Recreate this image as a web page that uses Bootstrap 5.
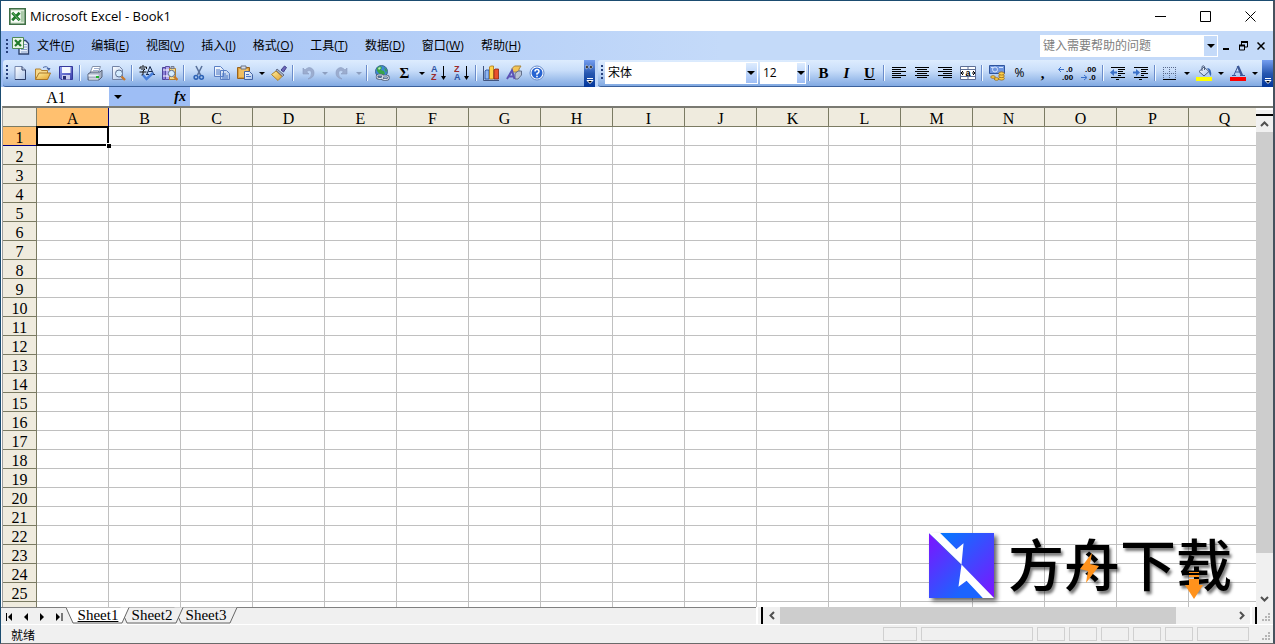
<!DOCTYPE html>
<html lang="zh-CN">
<head>
<meta charset="utf-8">
<meta name="viewport" content="width=device-width, initial-scale=1">
<title>Microsoft Excel - Book1</title>
<link href="https://cdn.jsdelivr.net/npm/bootstrap@5.3.0/dist/css/bootstrap.min.css" rel="stylesheet">
<style>
:root{--ui:"Open Sans","Noto Sans CJK SC",sans-serif;--sheet:"Liberation Serif","Noto Sans CJK SC",serif}
body{font:12px/16px var(--ui);color:#000;background:#fff}
button{font:inherit;color:inherit;background:none;border:0;padding:0}
svg{display:block;flex:none}
.window{border:1px solid #1b4c70;border-right-color:#47525e;border-bottom-color:#6a6a6a;border-right-width:2px}
.window>*{flex-shrink:0}
.titlebar{height:30px;padding-left:8px}
.titlebar .app-name{font-size:13px}
.winbtn{width:45px;height:29px}
.band{background:linear-gradient(90deg,#9ebef5,#c4daf9 720px)}
.menubar{height:29px;padding:0 8px 0 5px}
.grip{width:2px;background:repeating-linear-gradient(180deg,#27417c 0 2px,transparent 2px 4px);height:14px}
.toolbar-x .grip{margin:5px 0 0 3px}
.menu-items{gap:1px;margin-left:-1px}
.menubar a{color:#000;text-decoration:none;padding:0 8px;white-space:nowrap}
.mdi{gap:9px;margin-left:4px}
.combo{background:#fff;border:1px solid #fff;height:22px}
.toolbar-x .combo{margin:2px 0 0 2px}
.combo input{border:0;outline:0;background:transparent;min-width:0;padding:0 2px;font:inherit;line-height:18px}
.combo input::placeholder{color:#808080;opacity:1}
.combo button{width:13px;background:linear-gradient(#ddecfe,#9ebef5)}
.combo.ask{width:178px}
.combo.face{width:153px}
.combo.size{width:46px}
.combo.ask button{background:#c4daf9}
.caret::before{content:"";display:block;border:4px solid transparent;border-top-color:currentColor;border-bottom:0;margin:auto;width:0}
.caret.sm::before{border-width:3px 3px 0}
.toolrow{height:27px;padding-left:2px}
.toolbar-x{height:27px;border-bottom:1px solid #3b619c;background:linear-gradient(#ddecfe,#c9defa 40%,#81a9e2);border-radius:3px 0 0 3px}
#std{padding-right:36px}
#fmt{margin-left:3px}
.tb{width:23px;height:26px;display:flex;align-items:center;justify-content:center}
.dd{width:11px;height:26px}
.dis{color:#8d9fc0}
.vsep{width:2px;height:16px;margin:5px 2px 0;background:linear-gradient(90deg,#6a8ccb 50%,#f1f9ff 50%)}
.endcap{width:11px;height:27px;background:linear-gradient(#759ef0,#2757b0 50%,#00359c)}
.rich{font-family:var(--sheet);font-weight:700;font-size:15px}
.rich.fx{font-size:14px}
.formula{height:19px;background:#fff;padding-left:2px}
.namebox{width:106px;border:0;outline:0;text-align:center;font:16px/18px var(--sheet);padding:2px 0 0}
.namebtn{width:81px;background:#9ebef5;padding:0 4px 0 5px}
.fx-input{border:0;outline:0;font:16px/18px var(--sheet)}
.workbook{border-top:2px solid #7a7a72;border-left:1px solid #a0a0a0;margin-left:1px;min-height:0;flex:1 1 0}
.window>.workbook{flex-shrink:1}
.grid-area{overflow:hidden;min-width:0}
.cells{table-layout:fixed;border-collapse:separate;border-spacing:0;width:1258px;font:16px/18px var(--sheet)}
.cells th,.cells td{height:19px;padding:0;border:solid #c0c0c0;border-width:0 1px 1px 0}
.cells th{font-weight:400;text-align:center;background:#efebde;border-color:#7b7b63;line-height:15px;padding-top:3px}
.cells col:first-child{width:34px}.cells col{width:72px}
.cells th.on{background:#ffc06f;border-color:#000080}
.cells td.cur{position:relative}
.cells td.cur::before{content:"";position:absolute;inset:-1px -1px -1px -1px;border:2px solid #000}
.cells td.cur::after{content:"";position:absolute;right:-3px;bottom:-3px;width:5px;height:5px;background:#000;border:solid #fff;border-width:1px 0 0 1px}
.vscroll{width:17px;background:#f0f0f0}
.vscroll button,.hscroll button{color:#505050}
.vscroll button{height:16px}
.hscroll button{width:17px}
.split{height:8px;border:solid #000;border-width:0 0 2px;background:linear-gradient(#fff 2px,#f0f0f0 2px)}
.hsplit{width:7px;border-right:2px solid #000;background:linear-gradient(90deg,#fff 2px,#f0f0f0 2px)}
.thumb{background:#cdcdcd}
.sheetbar{height:17px;background:#f0f0f0;min-width:0}
.tabside{flex:755;border-top:1px solid #808080}
.hscroll{flex:517}
.nav-tri{width:17px;height:16px}
.nav-tri:nth-of-type(4){width:14px}
.sheettabs{font:15px/14px var(--sheet)}
.sheettab{width:64px;margin-right:-10px;height:16px;position:relative;padding:0 0 2px}
.sheettab svg{position:absolute;left:0;top:-1px}
.sheettab span{position:relative;white-space:nowrap}
.sizer{width:16px;display:flex;align-items:flex-end;justify-content:flex-end}
.statusbar{height:19px;background:#f0f0f0;border-top:1px solid #fff;padding-left:10px}
.pane{height:14px;border:1px solid #d0d0d0}
.logo-mark{position:absolute;right:41px;bottom:8px}
.logo-mark .tile{filter:drop-shadow(3px 3px 2px #0009)}
.logo-name{font:500 56px/58px "Noto Sans CJK SC",sans-serif;text-shadow:2px 3px 3px #0008;position:relative;margin-left:14px;height:66px}
.logo-name svg{position:absolute;left:0;top:0}
svg text{font-family:"Liberation Sans",sans-serif}
</style>
</head>
<body>
<svg width="0" height="0" class="position-absolute" aria-hidden="true">
<defs>
<linearGradient id="gy" x2="1" y2="1"><stop stop-color="#fff0a0"/><stop offset="1" stop-color="#e2a02c"/></linearGradient>
<linearGradient id="gb" x2="1" y2="1"><stop stop-color="#fff"/><stop offset="1" stop-color="#a9c3ea"/></linearGradient>
<linearGradient id="gs" x2="1" y2="1"><stop stop-color="#8f9cf0"/><stop offset="1" stop-color="#3a3fa8"/></linearGradient>
<linearGradient id="lt" x2="1" y2="1"><stop stop-color="#8012ff"/><stop offset=".7" stop-color="#1b64ff"/></linearGradient>
<linearGradient id="rt" x2="1" y2="1"><stop offset=".15" stop-color="#0a74ff"/><stop offset="1" stop-color="#8012ff"/></linearGradient>
<symbol id="i-new" viewBox="0 0 16 16"><path d="M3 1.500h7l3.500 3.500v9.500H3z" fill="url(#gb)" stroke="#7486ad"/><path d="M10 1.500V5h3.500M3 14.500h10.500V5" fill="none" stroke="#2c3d66"/></symbol>
<symbol id="i-open" viewBox="0 0 16 16"><path d="M.5 14V4h5l1 1.500h6V14z" fill="#f7d98a" stroke="#b08030"/><path d="M.5 14.500L4 8h11.500l-3 6.500z" fill="url(#gy)" stroke="#a87528"/><path d="M8 2.500q4-2 5.500 1" stroke="#4a67a5" fill="none"/><path d="M11.500 3h4L14 6z" fill="#4a67a5"/></symbol>
<symbol id="i-save" viewBox="0 0 16 16"><path d="M1.500 1.500h13v13H3l-1.500-1.500z" fill="url(#gs)" stroke="#34389c"/><path d="M4 2h8.500v6H4z" fill="#f5f8ff"/><path d="M4 10h8v4.500H4z" fill="#c9ccee"/><path d="M5 11h3v3.500H5z" fill="#262b72"/></symbol>
<symbol id="i-print" viewBox="0 0 16 16"><path d="M5.500 1.500h8L11 8H3z" fill="#fff" stroke="#8390a8"/><path d="M7 3.500h5M6 5.500h5" stroke="#9fb0d0"/><path d="M1 9l3-2h9l2-2v7l-3 3H1z" fill="#a9b3c6" stroke="#59647c"/><path d="M1.500 9.500h10v2h-10z" fill="#e8edf6"/><path d="M9 11h3v2H9z" fill="#25b52c"/><path d="M2 14h9" stroke="#f4f6fa"/></symbol>
<symbol id="i-preview" viewBox="0 0 16 16"><path d="M2.500 1.500h7l3 3v10h-10z" fill="url(#gb)" stroke="#7383a5"/><circle cx="9" cy="8.500" r="3.500" fill="#d4ecff" stroke="#5d6f90"/><path d="M11.500 11.500l3.500 3.500" stroke="#c6792c" stroke-width="2.400"/></symbol>
<symbol id="i-spell" viewBox="0 0 16 16"><path d="M4 0v1.500M1 4V2h6.500v2M2 4h4L4 6v4H2.500M.5 7h7" stroke="#111" fill="none"/><path d="M8 9l3-7.500L14.500 9M9.500 6.500H13M7 9.500h3M13 9.500h3" stroke="#172b50" fill="none"/><path d="M4 10l3.500 4L14 8" stroke="#477fdc" stroke-width="2.400" fill="none"/></symbol>
<symbol id="i-research" viewBox="0 0 16 16"><path d="M.5 2.500h3v12h-3z" fill="#8a7fd8" stroke="#4c4396"/><path d="M3.500 1.500h4v13h-4z" fill="#b3a8f0" stroke="#5b4ea5"/><path d="M1 5h6M1 11h6" stroke="#fff"/><path d="M7.500 3.500h6v11h-6z" fill="#f5d887" stroke="#b08030"/><path d="M9 1.500h3v2H9z" fill="#b7bccb" stroke="#717a90"/><circle cx="9.500" cy="8.500" r="3.200" fill="#d4ecff" stroke="#5d6f90"/><path d="M12 11.500l3.500 3.500" stroke="#c6792c" stroke-width="2.400"/></symbol>
<symbol id="i-cut" viewBox="0 0 16 16"><path d="M5 1l4.500 9M11 1L6.500 10" stroke="#5a719b" stroke-width="1.600"/><circle cx="5" cy="12.300" r="1.900" fill="none" stroke="#2d62b5" stroke-width="1.500"/><circle cx="10.500" cy="12.300" r="1.900" fill="none" stroke="#2d62b5" stroke-width="1.500"/></symbol>
<symbol id="i-copy" viewBox="0 0 16 16"><g fill="url(#gb)" stroke="#5a7fc4"><path d="M.5 1.500h6l3 3v7h-9zM6.500 5.500h6l3 3v6h-9z"/></g><path d="M2 5h4M2 7h4M2 9h4M8 9h4M8 11h6M8 13h6" stroke="#4d78c6"/></symbol>
<symbol id="i-paste" viewBox="0 0 16 16"><path d="M.5 2.500h12v11H.5z" fill="#dc9e38" stroke="#99631c"/><path d="M2 4h9v8H2z" fill="#f0bf62"/><path d="M4 1h5v3H4z" fill="#d8dde8" stroke="#6a7488"/><path d="M7.500 6.500h5l3 3v5h-8z" fill="url(#gb)" stroke="#4565a5"/><path d="M9 9.500h3M9 11.500h5" stroke="#4d78c6"/></symbol>
<symbol id="i-brush" viewBox="0 0 16 16"><path d="M10 5l3.500-4 2 1.500L12.500 7z" fill="#6c66b8" stroke="#41418a"/><path d="M6 4l7 6-1.500 1.500L5 5.500z" fill="#a7b0c5" stroke="#616c86"/><path d="M5 6L.5 9.500 7 15.500 11 11.500z" fill="url(#gy)" stroke="#aa8230"/></symbol>
<symbol id="i-undo" viewBox="0 0 16 16"><path d="M3 3v6h6L6.500 6.700Q11 4 11.500 8T8 14q6-1 6-6T9 2.500Q6.500 3 5 5z" fill="#9cadcf" stroke="#8b9cc0" stroke-width=".6"/></symbol>
<symbol id="i-link" viewBox="0 0 16 16"><circle cx="7.500" cy="6.500" r="6" fill="#3e86d8" stroke="#3d6a8c"/><path d="M3 3q3-3 5-1l-1 3 3 1 1 3-4 2-4-5zM10 2l3 3-1 3z" fill="#38a548"/><path d="M4 3q2-1.500 3 0L5 5z" fill="#bff0b8"/><g fill="none"><g stroke="#56647e" stroke-width="2.400"><rect x="3" y="10" width="6" height="3.500" rx="1.700"/><rect x="8" y="11" width="6.500" height="3.500" rx="1.700"/></g><g stroke="#dfe5ef"><rect x="3" y="10" width="6" height="3.500" rx="1.700"/><rect x="8" y="11" width="6.500" height="3.500" rx="1.700"/></g></g></symbol>
<symbol id="i-chart" viewBox="0 0 16 16"><path d="M.5 1v14.500H16" fill="none" stroke="#41547e"/><g stroke-width=".8"><path d="M2 6l1-1h3v9H2z" fill="#8fb6f2" stroke="#224a96"/><path d="M6.500 2l1-1h3v13h-4z" fill="#ffd34d" stroke="#a97412"/><path d="M11 5l1-1h3.500v10H11z" fill="#e8502c" stroke="#8d2510"/></g></symbol>
<symbol id="i-draw" viewBox="0 0 16 16"><path d="M6 3.500L8.500 1H15l-2 3v3H6z" fill="#f3c558" stroke="#a9843c"/><path d="M9 8.500L12 6h3.500v4L12 14H9z" fill="#b9c2d3" stroke="#63708c"/><path d="M1 14L6 5.500l2.500 8.500M3 11.500h5" stroke="#5c53b5" stroke-width="2" fill="none"/></symbol>
<symbol id="i-help" viewBox="0 0 16 16"><circle cx="8" cy="8" r="7" fill="#fff" stroke="#6489ca"/><circle cx="8" cy="8" r="5.500" fill="#2864d2"/><path d="M6 6.500Q6 4.500 8 4.500t2 2Q10 8 8 8.500v1.200" stroke="#fff" stroke-width="1.500" fill="none"/><path d="M7.200 10.800h1.600v1.500H7.200z" fill="#fff"/></symbol>
<symbol id="i-l" viewBox="0 0 16 16"><path d="M1 2.500h14M1 4.500h9M1 6.500h14M1 8.500h9M1 10.500h14M1 12.500h9" stroke="#000"/></symbol>
<symbol id="i-c" viewBox="0 0 16 16"><path d="M1 2.500h14M3 4.500h10M1 6.500h14M3 8.500h10M1 10.500h14M3 12.500h10" stroke="#000"/></symbol>
<symbol id="i-merge" viewBox="0 0 16 16"><path d="M.5 1.500h15v13H.5z" fill="#fff" stroke="#5d6f96"/><path d="M1 4.500h14M1 11.500h14M8 1.500v3M8 11.500v3" stroke="#5d6f96"/><path d="M1 8h3M15 8h-3M3 6L1 8l2 2M13 6l2 2-2 2" stroke="#000" fill="none"/><text x="5.500" y="10.500" font-size="9" font-weight="700">a</text></symbol>
<symbol id="i-money" viewBox="0 0 16 16"><path d="M.5.500h15v8H.5z" fill="#6f96df" stroke="#2f559e"/><circle cx="6" cy="4.500" r="2.500" fill="none" stroke="#d4e3fc"/><path d="M2 2.500h2M10 2.500h4" stroke="#d4e3fc"/><g fill="#ffd04a" stroke="#9c6b12" stroke-width=".8"><ellipse cx="12.500" cy="13.500" rx="2.800" ry="1.600"/><ellipse cx="12.500" cy="11" rx="2.800" ry="1.600"/><ellipse cx="12.500" cy="8.500" rx="2.800" ry="1.600"/><ellipse cx="4" cy="12" rx="2.300" ry="1.300"/><ellipse cx="7.500" cy="14" rx="2.300" ry="1.300"/></g></symbol>
<symbol id="i-out" viewBox="0 0 16 16"><path d="M1 2.500h14M8 4.500h7M8 6.500h5M8 8.500h7M8 10.500h3M1 12.500h14M6 14.500h3" stroke="#000"/><path d="M7 7.500H2" stroke="#3a70c8" stroke-width="2"/><path d="M4 4L0 7.500 4 11z" fill="#3a70c8"/></symbol>
<symbol id="i-in" viewBox="0 0 16 16"><path d="M1 2.500h14M8 4.500h7M8 6.500h5M8 8.500h7M8 10.500h3M1 12.500h14M6 14.500h3" stroke="#000"/><path d="M0 7.500h5" stroke="#3a70c8" stroke-width="2"/><path d="M3 4l4 3.500L3 11z" fill="#3a70c8"/></symbol>
<symbol id="i-border" viewBox="0 0 16 16"><path d="M1.500 2v11M7.500 2v11M13.500 2v11M1 2.500h13M1 8.500h13" stroke="#5a6a8c" stroke-dasharray="1 1"/><path d="M1 14.500h13" stroke="#000"/></symbol>
<symbol id="i-fill" viewBox="0 0 16 16"><path d="M3 6.500L8 2l5 4.500-5 4.500z" fill="url(#gb)" stroke="#4c5d7d"/><path d="M6 6V1.500q1.500-1.500 2.500 0V5" fill="none" stroke="#4c5d7d"/><path d="M11 3q5 0 4 8-2-1-2-5z" fill="#3767b4"/><path d="M0 12h16v4H0z" fill="#ff0"/></symbol>
<symbol id="i-color" viewBox="0 0 16 16"><path d="M4 10L8 1M5.500 7h5M2 10.500h4M10 10.500h5" stroke="#3c5897" fill="none"/><path d="M7.800 1l4.200 9.500" stroke="#3c5897" stroke-width="2.400"/><path d="M0 12h16v4H0z" fill="#f00"/></symbol>
<symbol id="i-xl" viewBox="0 0 16 16"><path d="M.5.500h15v15H.5z" fill="#dcebd8" stroke="#3f6f45" stroke-width="2"/><path d="M10 3h4v10h-4z" fill="#a9c9a8"/><path d="M2 3h9v10H2z" fill="#fff"/><path d="M3 4.500l7 7M10 4.500l-7 7" stroke="#1f7a2a" stroke-width="2.600"/><path d="M3.500 4.500l6 7" stroke="#7fbf80" stroke-width=".8"/></symbol>
</defs>
</svg>
<div class="window d-flex flex-column vh-100">
 <header class="titlebar d-flex align-items-center">
  <svg width="17" height="17"><use href="#i-xl"/></svg>
  <span class="app-name ms-1 me-auto">Microsoft Excel - Book1</span>
  <button class="winbtn" aria-label="最小化"><svg class="m-auto" width="11" height="11"><path d="M0 5.500h11" stroke="#000"/></svg></button>
  <button class="winbtn" aria-label="最大化"><svg class="m-auto" width="11" height="11"><path d="M.5.500h10v10H.5z" stroke="#000" fill="none"/></svg></button>
  <button class="winbtn" aria-label="关闭"><svg class="m-auto" width="11" height="11"><path d="M.5.500l10 10m0-10l-10 10" stroke="#000"/></svg></button>
 </header>
 <div class="band">
  <nav class="menubar d-flex align-items-center" aria-label="菜单">
   <span class="grip me-1"></span>
   <svg width="18" height="18" viewBox="0 0 18 18"><path d="M7 3.500h6.500l3 3v10.500H7z" fill="#e8effc" stroke="#2d436f" stroke-width="1.400"/><path d="M12 7.500h3M12 10h3M9 12.500h6M9 15h6" stroke="#839dca"/><path d="M.5.500h11v11H.5z" fill="#eaf4e6" stroke="#4f8a55"/><path d="M3 3l6 6M9 3L3 9" stroke="#217a2b" stroke-width="2.200"/></svg>
   <div class="d-flex menu-items">
   <a href="#">文件(<u>F</u>)</a><a href="#">编辑(<u>E</u>)</a><a href="#">视图(<u>V</u>)</a><a href="#">插入(<u>I</u>)</a><a href="#">格式(<u>O</u>)</a><a href="#">工具(<u>T</u>)</a><a href="#">数据(<u>D</u>)</a><a href="#">窗口(<u>W</u>)</a><a href="#">帮助(<u>H</u>)</a>
   </div>
   <div class="combo ask d-flex ms-auto"><input class="flex-fill" aria-label="键入需要帮助的问题" placeholder="键入需要帮助的问题"><button class="caret" aria-label="展开"></button></div>
   <div class="mdi d-flex align-items-center">
   <button aria-label="最小化窗口"><svg width="8" height="10"><path d="M1 8h6" stroke="#000" stroke-width="2"/></svg></button>
   <button aria-label="还原窗口"><svg width="9" height="10"><path d="M2.500 4V1h6v5H6" fill="none" stroke="#000"/><path d="M2 1h7M0 4.500h6" stroke="#000" stroke-width="2"/><path d="M.5 4v5h5V4" fill="none" stroke="#000"/></svg></button>
   <button aria-label="关闭窗口"><svg width="8" height="8"><path d="M.5.500l7 7m0-7l-7 7" stroke="#000" stroke-width="1.500"/></svg></button>
   </div>
  </nav>
  <div class="toolrow d-flex">
   <div class="toolbar-x d-flex align-items-start" id="std" role="toolbar" aria-label="常用">
    <span class="grip"></span>
   </div>
   <div class="endcap"><svg width="11" height="27"><path d="M2 5l3 2-3 2zM6 5l3 2-3 2z" stroke="#fff" stroke-width=".5"/><path d="M3 18.500h6" stroke="#fff"/><path d="M3 20.500h6l-3 3z" stroke="#fff"/></svg></div>
   <div class="toolbar-x d-flex align-items-start flex-grow-1" id="fmt" role="toolbar" aria-label="格式">
    <span class="grip"></span>
    <div class="combo face d-flex"><input class="flex-fill" aria-label="字体" value="宋体"><button class="caret" aria-label="选择字体"></button></div>
    <div class="combo size d-flex"><input class="flex-fill" aria-label="字号" value="12"><button class="caret" aria-label="选择字号"></button></div>
   </div>
   <div class="endcap"><svg width="11" height="27"><path d="M3 18.500h6" stroke="#fff"/><path d="M3 20.500h6l-3 3z" stroke="#fff"/></svg></div>
  </div>
 </div>
 <div class="formula d-flex">
  <input class="namebox" aria-label="名称框" value="A1">
  <div class="namebtn d-flex align-items-center justify-content-between"><button class="caret" aria-label="名称列表"></button><button class="fst-italic rich fx" aria-label="插入函数">fx</button></div>
  <input class="fx-input flex-grow-1" aria-label="编辑栏">
 </div>
 <main class="workbook d-flex position-relative">
  <div class="grid-area flex-grow-1"><table class="cells"><colgroup id="cols"></colgroup><thead></thead><tbody></tbody></table></div>
  <div class="vscroll d-flex flex-column">
   <div class="split"></div>
   <button aria-label="向上滚动"><svg class="m-auto" width="9" height="6"><path d="M1 5l3.500-3.500L8 5" stroke="currentColor" stroke-width="2" fill="none"/></svg></button>
   <div class="thumb" style="flex:421"></div><div style="flex:38"></div>
   <button aria-label="向下滚动"><svg class="m-auto" width="9" height="6"><path d="M1 1l3.500 3.500L8 1" stroke="currentColor" stroke-width="2" fill="none"/></svg></button>
  </div>
  <div class="logo-mark d-flex align-items-start">
   <svg class="tile" width="65" height="65" viewBox="0 0 64 64"><path d="M0 0v64h64z" fill="url(#lt)"/><path d="M0 0h64v64z" fill="url(#rt)"/><path d="M0 0h11l16 16 7-6-2 21L64 64H53L37 47l-8 6 3-22z" fill="#fff"/></svg>
   <div class="logo-name">方舟下载<svg width="224" height="66"><path d="M84 20L72 36l8 2-2 12 13-17-9-2z" fill="#ff921c"/><path d="M181 39h10v1h-10zM181 42h10v2h-10zM181 46h10v6h4l-9 14-9-14h4z" fill="#ff921c"/></svg></div>
  </div>
 </main>
 <div class="sheetbar d-flex">
  <div class="tabside d-flex">
   <button class="nav-tri" aria-label="第一张"><svg width="16" height="15"><path d="M5.500 4v8" stroke="#000"/><path d="M11 4v8L7 8z"/></svg></button>
   <button class="nav-tri" aria-label="上一张"><svg width="16" height="15"><path d="M10 4v8L6 8z"/></svg></button>
   <button class="nav-tri" aria-label="下一张"><svg width="16" height="15"><path d="M5 4v8l4-4z"/></svg></button>
   <button class="nav-tri" aria-label="最后一张"><svg width="14" height="15"><path d="M10 4v8" stroke="#000"/><path d="M4 4v8l4-4z"/></svg></button>
   <div class="sheettabs d-flex" id="tabs"></div>
  </div>
  <div class="hscroll d-flex">
   <div class="hsplit"></div>
   <button aria-label="向左滚动"><svg class="m-auto" width="6" height="9"><path d="M5 1L1.500 4.500 5 8" stroke="currentColor" stroke-width="2" fill="none"/></svg></button>
   <div class="thumb" style="flex:396"></div><div style="flex:57"></div>
   <button aria-label="向右滚动"><svg class="m-auto" width="6" height="9"><path d="M1 1l3.500 3.500L1 8" stroke="currentColor" stroke-width="2" fill="none"/></svg></button>
   <div class="hsplit"></div><div class="sizer"><svg width="12" height="12"><use href="#dots"/></svg></div>
  </div>
 </div>
 <footer class="statusbar d-flex align-items-center">
  <span class="me-auto pt-1">就绪</span>
  <div class="d-flex gap-1 me-2" id="panes"></div>
  <div class="sizer align-self-stretch"><svg width="12" height="12"><path id="dots" d="M7 1h2v2H7zM7 4h2v2H7zM4 4h2v2H4zM7 7h2v2H7zM4 7h2v2H4zM1 7h2v2H1z" fill="#b5b5b5"/></svg></div>
 </footer>
</div>
<script>
const $ = s => document.querySelector(s);
const ico = (id, name) => `<button class="tb" aria-label="${name}"><svg width="16" height="16"><use href="#i-${id}"/></svg></button>`;
const raw = (html, name) => `<button class="tb" aria-label="${name}">${html}</button>`;
const sep = '<span class="vsep"></span>', dd = c => `<button class="dd caret sm ${c || ''}" aria-label="更多"></button>`;
const sort = (a, b) => `<svg width="16" height="20"><text x="0" y="9" font-size="9" fill="#2d55a5" font-weight="700">${a}</text><text x="0" y="17" font-size="9" fill="#9c2a2a" font-weight="700">${b}</text><path d="M12.500 3v12" stroke="#000"/><path d="M10 13h5l-2.500 4z"/></svg>`;
const dec = (a, b, x) => `<svg width="18" height="18"><text x="${x ? 5 : 9}" y="8" font-size="8" font-weight="700">${a}</text><text x="${x ? 9 : 5}" y="16" font-size="8" font-weight="700">${b}</text>${x ? '<path d="M1 13.500h5M4 11l3 2.500-3 2.500" stroke="#3a70c8" fill="none"/>' : '<path d="M2 5.500h5M4 3L1.500 5.500 4 8" stroke="#3a70c8" fill="none"/>'}</svg>`;
$('#std').insertAdjacentHTML('beforeend',
 ico('new','新建')+ico('open','打开')+ico('save','保存')+sep+ico('print','打印')+ico('preview','打印预览')+sep+ico('spell','拼写检查')+ico('research','信息检索')+sep+
 ico('cut','剪切')+ico('copy','复制')+ico('paste','粘贴')+dd()+ico('brush','格式刷')+sep+ico('undo','撤消')+dd('dis')+
 raw('<svg width="16" height="16"><use href="#i-undo" transform="matrix(-1 0 0 1 16 0)"/></svg>','恢复')+dd('dis')+sep+ico('link','超链接')+raw('<span class="rich">Σ</span>','自动求和')+dd()+
 raw(sort('A','Z'),'升序')+raw(sort('Z','A').replace('#2d55a5','#x').replace('#9c2a2a','#2d55a5').replace('#x','#9c2a2a'),'降序')+sep+ico('chart','图表向导')+ico('draw','绘图')+ico('help','帮助'));
$('#fmt').insertAdjacentHTML('beforeend',
 sep+raw('<b class="rich">B</b>','加粗')+raw('<i class="rich">I</i>','倾斜')+raw('<u class="rich">U</u>','下划线')+sep+
 ico('l','左对齐')+ico('c','居中')+raw('<svg width="16" height="16"><use href="#i-l" transform="matrix(-1 0 0 1 16 0)"/></svg>','右对齐')+ico('merge','合并及居中')+sep+
 ico('money','货币样式')+raw('%','百分比样式')+raw('<span class="rich">,</span>','千位分隔样式')+raw(dec('.0','.00',0),'增加小数位数')+raw(dec('.00','.0',1),'减少小数位数')+sep+
 ico('out','减少缩进量')+ico('in','增加缩进量')+sep+ico('border','边框')+dd()+ico('fill','填充颜色')+dd()+ico('color','字体颜色')+dd());
const L = [...'ABCDEFGHIJKLMNOPQ'];
$('#cols').innerHTML = '<col>'.repeat(18);
$('.cells thead').innerHTML = '<tr><th></th>' + L.map((c, i) => `<th scope="col"${i ? '' : ' class="on"'}>${c}</th>`).join('') + '</tr>';
$('.cells tbody').innerHTML = Array.from({length: 26}, (_, r) => `<tr><th scope="row"${r ? '' : ' class="on"'}>${r < 25 ? r + 1 : ''}</th>` + L.map((c, i) => `<td${r + i ? '' : ' class="cur"'}></td>`).join('') + '</tr>').join('');
$('#tabs').innerHTML = [1, 2, 3].map(n => `<button class="sheettab" style="z-index:${4 - n}"><svg width="64" height="17"><path d="M0 .5l7 15.500h49l7-15.500" fill="${n < 2 ? '#fff' : '#f0f0f0'}" stroke="#666"/></svg><span${n < 2 ? ' class="text-decoration-underline"' : ''}>Sheet${n}</span></button>`).join('');
$('#panes').innerHTML = [34, 112, 28, 28, 28, 28, 28, 52].map(w => `<span class="pane" style="width:${w}px"></span>`).join('');
</script>
<script src="https://cdn.jsdelivr.net/npm/bootstrap@5.3.0/dist/js/bootstrap.bundle.min.js"></script>
</body>
</html>
